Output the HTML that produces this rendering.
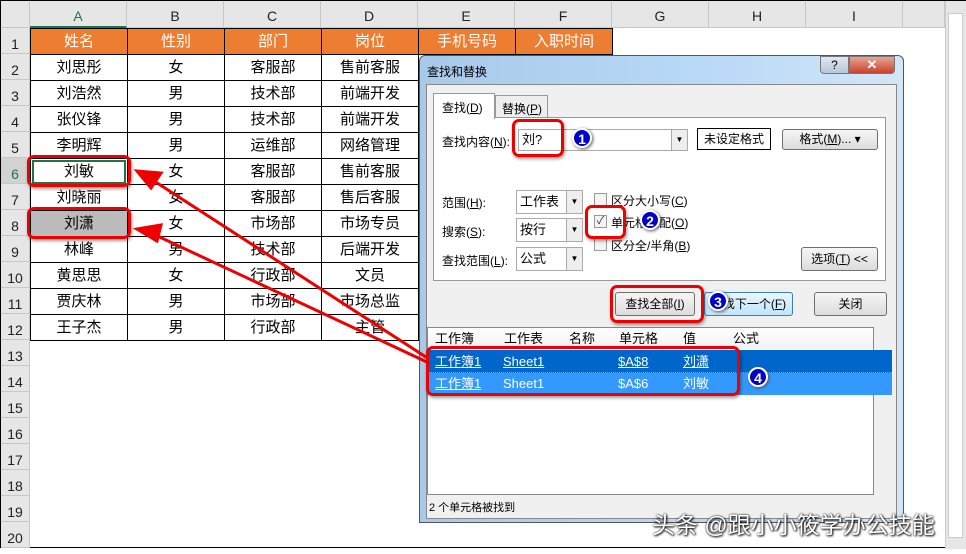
<!DOCTYPE html>
<html><head><meta charset="utf-8"><style>
*{margin:0;padding:0;box-sizing:border-box}
body{width:966px;height:548px;overflow:hidden;background:#fff;font-family:"Liberation Sans","Noto Sans CJK SC",sans-serif;position:relative;border:1px solid #000}
.a{position:absolute}
.ch{position:absolute;top:0;height:27px;background:#e6e6e6;border-right:1px solid #c8c8c8;border-bottom:1px solid #c8c8c8;text-align:center;font-size:14px;line-height:30px;color:#222}
.rh{position:absolute;left:0;width:29px;height:26px;background:#e6e6e6;border-bottom:1px solid #c8c8c8;border-right:1px solid #c8c8c8;font-size:14px;text-align:center;line-height:32px;color:#222}
.c{position:absolute;height:27px;width:98px;border:1px solid #000;text-align:center;font-size:15px;line-height:25px;color:#000}
.h{background:#ed7d31;color:#fff;border-color:#000}
.red{position:absolute;border:3px solid #e00;border-radius:7px;box-shadow:1px 2px 3px rgba(0,0,0,.4)}
.n{position:absolute;width:20px;height:20px;border-radius:50%;background:#00c;color:#fff;font-weight:bold;font-size:14px;text-align:center;line-height:19px;border:2px solid #fff;box-shadow:1px 1px 3px #555}
.btn{position:absolute;border:1px solid #707070;border-radius:3px;background:linear-gradient(#f6f6f6,#dcdcdc);font-size:12px;text-align:center;line-height:22px}
.sel{position:absolute;height:24px;border:1px solid #aaa;background:#fff;font-size:13px;line-height:22px;padding-left:3px}
.dd{position:absolute;right:0;top:0;width:16px;height:22px;border-left:1px solid #aaa;background:#eee;font-size:8px;text-align:center;line-height:22px}
.lb{position:absolute;font-size:12px}
.cb{position:absolute;width:13px;height:13px;border:1px solid #999;background:#f4f4f4}
</style></head><body>
<div class="ch" style="left:0;width:29px"></div>
<div class="ch" style="left:29px;width:97px;border-bottom:2px solid #217346;color:#217346">A</div>
<div class="ch" style="left:126px;width:97px">B</div>
<div class="ch" style="left:223px;width:97px">C</div>
<div class="ch" style="left:320px;width:97px">D</div>
<div class="ch" style="left:417px;width:97px">E</div>
<div class="ch" style="left:514px;width:97px">F</div>
<div class="ch" style="left:611px;width:97px">G</div>
<div class="ch" style="left:708px;width:97px">H</div>
<div class="ch" style="left:805px;width:97px">I</div>
<div class="ch" style="left:902px;width:42px"></div>
<div class="a" style="left:944px;top:0;width:21px;height:548px;background:#e6e6e6;border-left:1px solid #ccc"></div>
<div class="a" style="left:947px;top:12px;width:15px;height:525px;background:#fff;border:1px solid #ccc"></div>
<div class="rh" style="top:27px">1</div><div class="rh" style="top:53px">2</div><div class="rh" style="top:79px">3</div><div class="rh" style="top:105px">4</div><div class="rh" style="top:131px">5</div><div class="rh" style="top:157px;color:#217346;background:#d2d2d2">6</div><div class="rh" style="top:183px">7</div><div class="rh" style="top:209px">8</div><div class="rh" style="top:235px">9</div><div class="rh" style="top:261px">10</div><div class="rh" style="top:287px">11</div><div class="rh" style="top:313px">12</div><div class="rh" style="top:339px">13</div><div class="rh" style="top:365px">14</div><div class="rh" style="top:391px">15</div><div class="rh" style="top:417px">16</div><div class="rh" style="top:443px">17</div><div class="rh" style="top:469px">18</div><div class="rh" style="top:495px">19</div><div class="rh" style="top:521px">20</div>

<div class="c h" style="left:29px;top:27px">姓名</div><div class="c h" style="left:126px;top:27px">性别</div><div class="c h" style="left:223px;top:27px">部门</div><div class="c h" style="left:320px;top:27px">岗位</div><div class="c h" style="left:417px;top:27px">手机号码</div><div class="c h" style="left:514px;top:27px">入职时间</div>

<div class="c" style="left:29px;top:53px">刘思彤</div><div class="c" style="left:126px;top:53px">女</div><div class="c" style="left:223px;top:53px">客服部</div><div class="c" style="left:320px;top:53px">售前客服</div>
<div class="c" style="left:29px;top:79px">刘浩然</div><div class="c" style="left:126px;top:79px">男</div><div class="c" style="left:223px;top:79px">技术部</div><div class="c" style="left:320px;top:79px">前端开发</div>
<div class="c" style="left:29px;top:105px">张仪锋</div><div class="c" style="left:126px;top:105px">男</div><div class="c" style="left:223px;top:105px">技术部</div><div class="c" style="left:320px;top:105px">前端开发</div>
<div class="c" style="left:29px;top:131px">李明辉</div><div class="c" style="left:126px;top:131px">男</div><div class="c" style="left:223px;top:131px">运维部</div><div class="c" style="left:320px;top:131px">网络管理</div>
<div class="c" style="left:29px;top:157px">刘敏</div><div class="c" style="left:126px;top:157px">女</div><div class="c" style="left:223px;top:157px">客服部</div><div class="c" style="left:320px;top:157px">售前客服</div>
<div class="c" style="left:29px;top:183px">刘晓丽</div><div class="c" style="left:126px;top:183px">女</div><div class="c" style="left:223px;top:183px">客服部</div><div class="c" style="left:320px;top:183px">售后客服</div>
<div class="c" style="left:29px;top:209px;background:#bbb">刘潇</div><div class="c" style="left:126px;top:209px">女</div><div class="c" style="left:223px;top:209px">市场部</div><div class="c" style="left:320px;top:209px">市场专员</div>
<div class="c" style="left:29px;top:235px">林峰</div><div class="c" style="left:126px;top:235px">男</div><div class="c" style="left:223px;top:235px">技术部</div><div class="c" style="left:320px;top:235px">后端开发</div>
<div class="c" style="left:29px;top:261px">黄思思</div><div class="c" style="left:126px;top:261px">女</div><div class="c" style="left:223px;top:261px">行政部</div><div class="c" style="left:320px;top:261px">文员</div>
<div class="c" style="left:29px;top:287px">贾庆林</div><div class="c" style="left:126px;top:287px">男</div><div class="c" style="left:223px;top:287px">市场部</div><div class="c" style="left:320px;top:287px">市场总监</div>
<div class="c" style="left:29px;top:313px">王子杰</div><div class="c" style="left:126px;top:313px">男</div><div class="c" style="left:223px;top:313px">行政部</div><div class="c" style="left:320px;top:313px">主管</div>
<div class="a" style="left:31px;top:159px;width:94px;height:24px;border:2px solid #217346"></div>
<div class="red" style="left:26px;top:154px;width:104px;height:32px"></div>
<div class="red" style="left:26px;top:206px;width:104px;height:32px"></div>

<!-- dialog -->
<div class="a" style="left:418px;top:54px;width:485px;height:468px;border:1px solid #555;border-radius:6px 6px 0 0;background:linear-gradient(90deg,#a9c9ea,#b9d9f7 60%,#d3e6f8);"></div>
<div class="a" style="left:426px;top:62px;font-size:12px">查找和替换</div>
<div class="a" style="left:819px;top:55px;width:29px;height:18px;border:1px solid #777;border-radius:0 0 0 4px;background:linear-gradient(#dfe8f1,#b9c7d6);font-size:12px;text-align:center;line-height:16px">?</div>
<div class="a" style="left:848px;top:55px;width:46px;height:18px;border:1px solid #777;border-radius:0 0 4px 0;background:linear-gradient(#e9a394,#c7432c);color:#fff;font-weight:bold;font-size:13px;text-align:center;line-height:16px">✕</div>
<div class="a" style="left:425px;top:83px;width:471px;height:435px;background:#f0f0f0;border:1px solid #888"></div>
<div class="a" style="left:432px;top:116px;width:453px;height:164px;background:#fff;border:1px solid #999"></div>
<div class="a" style="left:432px;top:92px;width:62px;height:26px;background:#fff;border:1px solid #999;border-bottom:none;font-size:12px;padding:5px 0 0 8px">查找(<u>D</u>)</div>
<div class="a" style="left:494px;top:94px;width:53px;height:22px;background:#eee;border:1px solid #999;border-bottom:none;font-size:12px;padding:4px 0 0 6px">替换(<u>P</u>)</div>
<div class="lb" style="left:441px;top:132px">查找内容(<u>N</u>):</div>
<div class="sel" style="left:517px;top:128px;width:170px;height:22px;line-height:20px">刘?<div class="dd" style="height:20px;line-height:20px">▼</div></div>
<div class="a" style="left:696px;top:127px;width:74px;height:22px;border:1px solid #000;background:#fff;font-size:12px;text-align:center;line-height:20px">未设定格式</div>
<div class="btn" style="left:781px;top:128px;width:96px;height:21px;line-height:19px">格式(<u>M</u>)... ▾</div>
<div class="lb" style="left:441px;top:193px">范围(<u>H</u>):</div>
<div class="sel" style="left:515px;top:189px;width:67px">工作表<div class="dd">▼</div></div>
<div class="lb" style="left:441px;top:222px">搜索(<u>S</u>):</div>
<div class="sel" style="left:515px;top:217px;width:67px">按行<div class="dd">▼</div></div>
<div class="lb" style="left:441px;top:251px">查找范围(<u>L</u>):</div>
<div class="sel" style="left:515px;top:246px;width:67px">公式<div class="dd">▼</div></div>
<div class="cb" style="left:593px;top:192px"></div><div class="lb" style="left:610px;top:191px">区分大小写(<u>C</u>)</div>
<div class="cb" style="left:593px;top:214px;color:#335;font-size:11px;line-height:11px;text-align:center">✓</div><div class="lb" style="left:610px;top:213px">单元格匹配(<u>O</u>)</div>
<div class="cb" style="left:593px;top:237px"></div><div class="lb" style="left:610px;top:236px">区分全/半角(<u>B</u>)</div>
<div class="btn" style="left:800px;top:246px;width:77px;height:24px">选项(<u>T</u>) &lt;&lt;</div>
<div class="btn" style="left:614px;top:291px;width:80px;height:24px">查找全部(<u>I</u>)</div>
<div class="btn" style="left:703px;top:291px;width:89px;height:24px;border-color:#3c7fb1;background:linear-gradient(#eaf6fd,#bee6fd)">查找下一个(<u>F</u>)</div>
<div class="btn" style="left:813px;top:291px;width:73px;height:24px">关闭</div>
<div class="a" style="left:426px;top:326px;width:447px;height:168px;background:#fff;border:1px solid #888"></div>
<div class="a" style="left:427px;top:327px;width:445px;height:21px;background:linear-gradient(#fff,#f2f2f2);font-size:13px;line-height:22px;color:#000">
<span class="a" style="left:7px">工作簿</span><span class="a" style="left:76px">工作表</span><span class="a" style="left:141px">名称</span><span class="a" style="left:191px">单元格</span><span class="a" style="left:255px">值</span><span class="a" style="left:305px">公式</span></div>
<div class="a" style="left:427px;top:349px;width:464px;height:23px;background:#0066cc;border-bottom:1px dotted #f90;color:#fff;font-size:13px;line-height:23px">
<u class="a" style="left:7px">工作簿1</u><u class="a" style="left:75px">Sheet1</u><u class="a" style="left:190px">$A$8</u><u class="a" style="left:255px">刘潇</u></div>
<div class="a" style="left:427px;top:372px;width:464px;height:22px;background:#3399ff;color:#fff;font-size:13px;line-height:22px">
<span class="a" style="left:7px;text-decoration:underline">工作簿1</span><span class="a" style="left:75px">Sheet1</span><span class="a" style="left:190px">$A$6</span><span class="a" style="left:255px">刘敏</span></div>
<div class="a" style="left:428px;top:498px;font-size:11px">2 个单元格被找到</div>

<svg class="a" style="left:0;top:0" width="966" height="548"><g stroke="#e00" stroke-width="3" fill="#e00">
<line x1="428" y1="358" x2="150" y2="178"/><line x1="428" y1="362" x2="150" y2="232"/>
<polygon points="136,170 160,172 150,187"/><polygon points="136,228 160,224 156,240"/></g></svg>

<div class="red" style="left:511px;top:118px;width:52px;height:38px"></div>
<div class="red" style="left:584px;top:204px;width:41px;height:34px"></div>
<div class="red" style="left:609px;top:284px;width:94px;height:38px"></div>
<div class="red" style="left:425px;top:345px;width:314px;height:50px"></div>
<div class="n" style="left:571px;top:127px">1</div>
<div class="n" style="left:639px;top:209px">2</div>
<div class="n" style="left:707px;top:290px">3</div>
<div class="n" style="left:747px;top:366px">4</div>
<div class="a" style="left:651px;top:505px;font-size:23px;color:#fff;text-shadow:0 0 2px #000,1px 1px 2px #000">头条 @跟小小筱学办公技能</div>
</body></html>
